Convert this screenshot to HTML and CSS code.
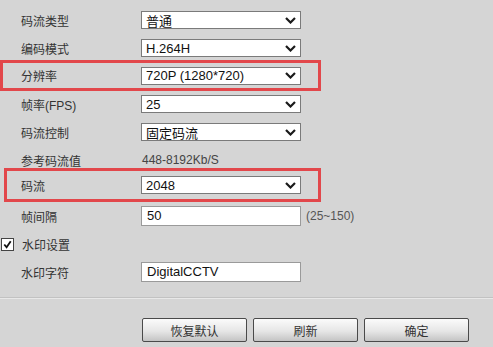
FILE: index.html
```html
<!DOCTYPE html>
<html lang="zh-CN">
<head>
  <meta charset="UTF-8">
  <title>编码设置</title>
  <link rel="stylesheet" href="styles.css">
</head>
<body>

<div class="form">
  <div class="row">
    <div class="label">码流类型</div>
    <div class="select"><span>普通</span><svg viewBox="0 0 11 7"><polyline points="1,1 5.5,5.5 10,1"/></svg></div>
  </div>
  <div class="row">
    <div class="label">编码模式</div>
    <div class="select"><span>H.264H</span><svg viewBox="0 0 11 7"><polyline points="1,1 5.5,5.5 10,1"/></svg></div>
  </div>
  <div class="row mark mark-a">
    <div class="label">分辨率</div>
    <div class="select"><span>720P (1280*720)</span><svg viewBox="0 0 11 7"><polyline points="1,1 5.5,5.5 10,1"/></svg></div>
  </div>
  <div class="row">
    <div class="label">帧率(FPS)</div>
    <div class="select"><span>25</span><svg viewBox="0 0 11 7"><polyline points="1,1 5.5,5.5 10,1"/></svg></div>
  </div>
  <div class="row">
    <div class="label">码流控制</div>
    <div class="select"><span>固定码流</span><svg viewBox="0 0 11 7"><polyline points="1,1 5.5,5.5 10,1"/></svg></div>
  </div>
  <div class="row">
    <div class="label">参考码流值</div>
    <div class="value">448-8192Kb/S</div>
  </div>
  <div class="row mark mark-b">
    <div class="label">码流</div>
    <div class="select"><span>2048</span><svg viewBox="0 0 11 7"><polyline points="1,1 5.5,5.5 10,1"/></svg></div>
  </div>
  <div class="row">
    <div class="label">帧间隔</div>
    <div class="field">
      <div class="input">50</div>
      <span class="hint">(25~150)</span>
    </div>
  </div>
  <div class="row check-row">
    <span class="check"><svg viewBox="0 0 12 12"><polyline points="2.5,6 5,9 9.5,2.5"/></svg></span>
    <span class="check-label">水印设置</span>
  </div>
  <div class="row">
    <div class="label">水印字符</div>
    <div class="input">DigitalCCTV</div>
  </div>
</div>

<div class="sep"></div>

<div class="buttons">
  <button class="btn">恢复默认</button>
  <button class="btn">刷新</button>
  <button class="btn">确定</button>
</div>

</body>
</html>
```

FILE: styles.css
```css
body {
  margin: 0;
  background: #d5d5d5;
  font-family: "Liberation Sans", "Noto Sans CJK SC", sans-serif;
  color: #333;
  font-size: 12px;
}

.form {
  padding-top: 6px;
}

.row {
  display: grid;
  grid-template-columns: 141px 1fr;
  align-items: center;
  height: 28px;
  box-sizing: border-box;
}

.label {
  padding-left: 21px;
}

.mark {
  border: 3px solid #e2474b;
  width: 321px;
}

.mark .label {
  padding-left: 18px;
}

.mark-a {
  height: 31px;
  margin: -2px 0 -1px;
  grid-template-columns: 138px 1fr;
}

.mark-b {
  height: 34px;
  margin: -6px 0 0 4px;
  width: 317px;
  grid-template-columns: 134px 1fr;
}

.mark-b .label {
  padding-left: 14px;
}

.select {
  width: 160px;
  height: 18px;
  box-sizing: border-box;
  border: 1px solid #7a7a7a;
  background: #fff;
  display: flex;
  align-items: center;
  justify-content: space-between;
  padding: 0 4px 0 4px;
  font-size: 13px;
  color: #111;
}

.select svg {
  width: 11px;
  height: 7px;
  fill: none;
  stroke: #1a1a1a;
  stroke-width: 2.2;
}

.value {
  padding-left: 1px;
  color: #444;
}

.field {
  display: flex;
  align-items: center;
  gap: 5px;
}

.input {
  width: 160px;
  height: 20px;
  box-sizing: border-box;
  border: 1px solid #9a9a9a;
  background: #fff;
  padding-left: 5px;
  font-size: 13px;
  line-height: 18px;
  color: #111;
}

.hint {
  color: #555;
}

.check-row {
  display: flex;
  align-items: center;
  padding-left: 1px;
}

.check {
  width: 13px;
  height: 13px;
  box-sizing: border-box;
  border: 1px solid #444;
  background: #fff;
  display: flex;
}

.check svg {
  width: 11px;
  height: 11px;
  fill: none;
  stroke: #111;
  stroke-width: 2;
}

.check-label {
  margin-left: 8px;
}

.sep {
  margin-top: 11px;
  border-top: 1px solid #c2c2c2;
  border-bottom: 1px solid #e8e8e8;
}

.buttons {
  display: flex;
  gap: 6px;
  padding: 19px 0 0 142px;
}

.btn {
  width: 105px;
  height: 24px;
  border: 1px solid #4a4a4a;
  border-radius: 2px;
  background: linear-gradient(#fbfbfb, #e6e6e6 55%, #c4c4c4);
  font-family: "Liberation Sans", "Noto Sans CJK SC", sans-serif;
  font-size: 12px;
  color: #333;
  padding: 0;
}
```
